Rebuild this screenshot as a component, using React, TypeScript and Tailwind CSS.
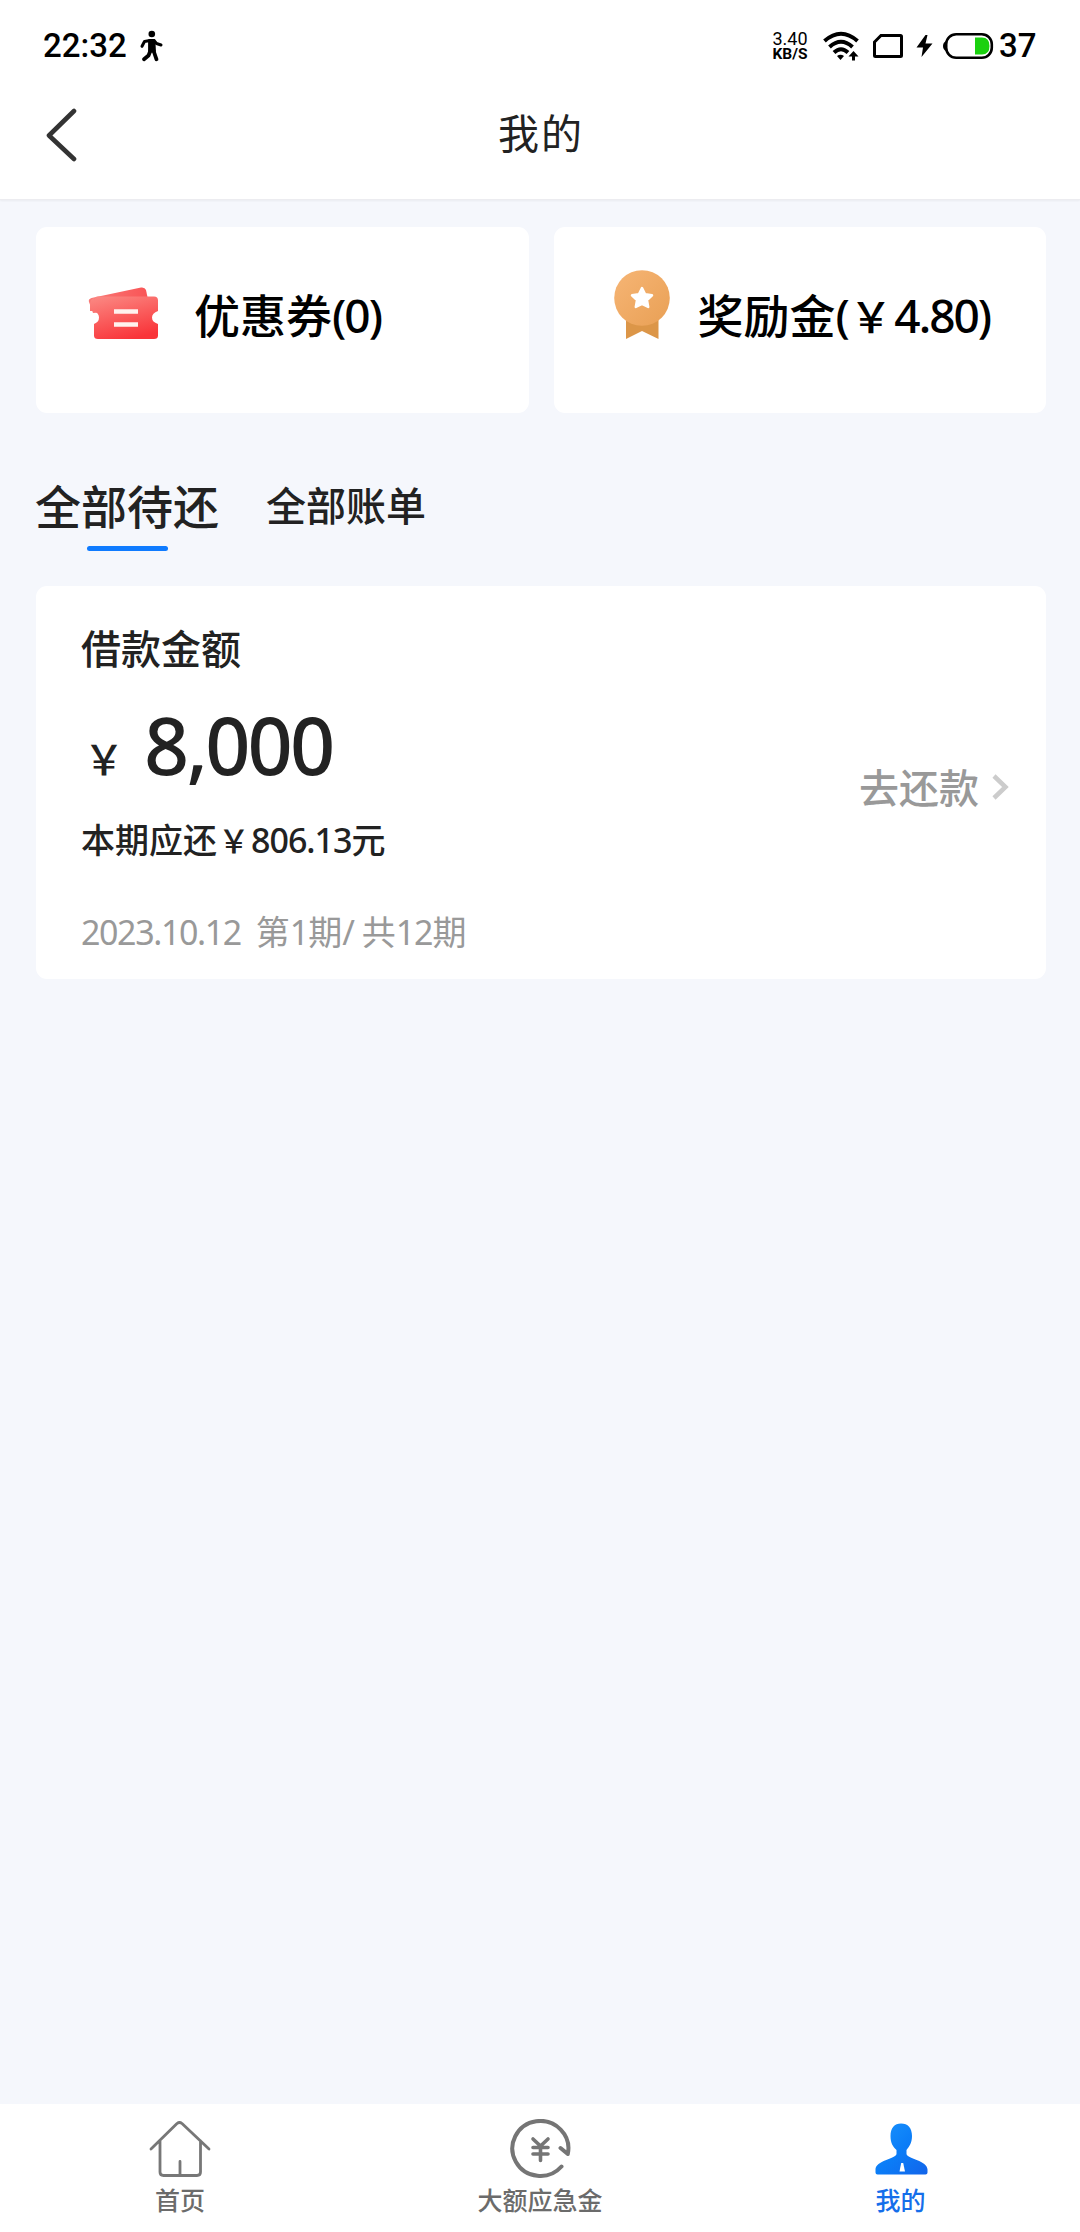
import React from "react";

function StatusBar() {
  return (
    <div className="flex h-[92px] items-center pl-[43px] pr-[44px] font-['Roboto',sans-serif] text-black">
      <span className="text-[33px] font-medium leading-[40px]">22:32</span>
      <svg className="ml-[12px] h-[32px] w-[24px]" viewBox="0 0 24 32" fill="none" stroke="#000" strokeLinecap="round" strokeLinejoin="round">
        <circle cx="12.800" cy="4" r="3.300" fill="#000" stroke="none" />
        <path d="M10.500 10.500H15L15.500 21H10.500z" fill="#000" strokeWidth="2.800" />
        <path d="M11 10.500L5.500 11.500L3 16.300M15 10.500L17.500 13.500L22 15" strokeWidth="3" />
        <path d="M11.500 20.500L9.500 25.500L5 29.300M14.500 20.500L16 25L17.500 29.300" strokeWidth="3.800" />
      </svg>
      <div className="ml-auto flex w-[38px] flex-col items-center pt-[1px]">
        <span className="text-[18px] leading-[16px]">3.40</span>
        <span className="text-[15.500px] font-bold leading-[15px]">KB/S</span>
      </div>
      <svg className="ml-[14px] h-[30px] w-[36px]" viewBox="0 0 36 30" fill="none" stroke="#000">
        <path d="M1.500 10Q18 -4.500 34.500 10" strokeWidth="4" />
        <path d="M6.500 16Q18 5.500 29.500 16" strokeWidth="4" />
        <path d="M11 21.500Q18 15 25 21.500" strokeWidth="4" />
        <path d="M14 25Q17.500 22.500 21 25L17.500 29z" fill="#000" stroke="none" />
        <path d="M30.500 20L35.500 25.500H32V29.500H29V25.500H25.500z" fill="#000" stroke="none" />
      </svg>
      <svg className="ml-[13px] h-[26px] w-[32px]" viewBox="0 0 32 26" fill="none" stroke="#000" strokeWidth="3">
        <path d="M9 2.500H28.500Q29.500 2.500 29.500 3.500V22.500Q29.500 23.500 28.500 23.500H3.500Q2.500 23.500 2.500 22.500V9z" />
      </svg>
      <svg className="ml-[12px] h-[22px] w-[17px]" viewBox="0 0 17 22">
        <path d="M9.500 0L.5 12.500H7L5.500 22L16.500 8.500H9.500L11.500 0z" fill="#000" />
      </svg>
      <svg className="ml-[9px] h-[28px] w-[52px]" viewBox="0 0 52 28">
        <path d="M4 9Q1 10.500 1 14T4 19z" fill="#000" />
        <rect x="4.200" y="2.200" width="45.600" height="23.600" rx="10" fill="#fff" stroke="#000" strokeWidth="2.600" />
        <path d="M33 5.500H40Q47.500 5.500 47.500 14T40 22.500H33z" fill="#1ad10f" />
      </svg>
      <span className="ml-[5px] w-[37px] text-[33px] font-medium leading-[40px]">37</span>
    </div>
  );
}

function Header() {
  return (
    <div className="grid h-[106px] grid-cols-[1fr_auto_1fr] items-center pb-[20px]">
      <svg className="ml-[45px] h-[54px] w-[34px]" viewBox="0 0 34 54" fill="none" stroke="#333" strokeWidth="4.600" strokeLinecap="round" strokeLinejoin="round">
        <path d="M29 3L4 27.500L29 51" />
      </svg>
      <h1 className="-mt-[8px] pl-[2px] text-[41px] leading-[60px] tracking-[2px] text-[#222]">我的</h1>
    </div>
  );
}

function CouponIcon() {
  return (
    <svg className="h-[54px] w-[72px] shrink-0" viewBox="0 0 72 54">
      <defs>
        <linearGradient id="coupon-front" x1="0.200" y1="0" x2="0.600" y2="1">
          <stop offset="0" stopColor="#fb8580" />
          <stop offset="1" stopColor="#f93439" />
        </linearGradient>
        <linearGradient id="coupon-back" x1="0" y1="0" x2="1" y2="0">
          <stop offset="0" stopColor="#f97a77" />
          <stop offset="1" stopColor="#f95355" />
        </linearGradient>
      </defs>
      <path d="M1 15Q0 12 3.500 11L53 .5Q57 0 58 3L62 22L5 26z" fill="url(#coupon-back)" />
      <path d="M6 14Q6 9.500 10 9.500H66Q70 9.500 70 13.500V24Q64 26 64 30.500T70 37V48.500Q70 52 66 52H10Q6 52 6 48.500V37Q11 35 11 30.500T6 24H2V18Q2 12 6 11z" fill="url(#coupon-front)" />
      <path d="M26 24.500H50M26 37.500H50" stroke="#fff2ee" strokeWidth="4.500" />
    </svg>
  );
}

function MedalIcon() {
  return (
    <svg className="h-[70px] w-[56px] shrink-0" viewBox="0 0 56 70">
      <defs>
        <linearGradient id="medal" x1="0" y1="0" x2="1" y2="1">
          <stop offset="0" stopColor="#f6b575" />
          <stop offset="1" stopColor="#e9a055" />
        </linearGradient>
      </defs>
      <path d="M12 45H44.500V69L28 61L12 69z" fill="#dc9648" />
      <circle cx="28" cy="28" r="27.800" fill="url(#medal)" />
      <path d="M28 18L31.100 24.300L38 25.300L33 30.200L34.200 37L28 33.800L21.800 37L23 30.200L18 25.300L24.900 24.300z" fill="#fff" stroke="#fff" strokeWidth="2.500" strokeLinejoin="round" />
    </svg>
  );
}

/* Latin digits inside a Chinese line. */
function Num({ children, className }: { children: React.ReactNode; className: string }) {
  return <span className={`font-['Noto_Sans',sans-serif] leading-none ${className}`}>{children}</span>;
}

/* Full-width yen sign, drawn slightly smaller inside its own cell. */
function Yen() {
  return <span className="inline-block origin-[50%_88%] scale-[0.92] leading-none">￥</span>;
}

function SummaryCards() {
  return (
    <div className="grid grid-cols-2 gap-[25px]">
      <div className="flex h-[186px] items-center rounded-[11px] bg-white pb-[14px] pl-[52px]">
        <div className="mt-[1px]"><CouponIcon /></div>
        <span className="ml-[34px] text-[46px] font-medium leading-[60px] text-black">优惠券<Num className="tracking-[-2px]">(0)</Num></span>
      </div>
      <div className="flex h-[186px] items-center rounded-[11px] bg-white pb-[14px] pl-[60px]">
        <div className="-mt-[16px]"><MedalIcon /></div>
        <span className="ml-[28px] whitespace-nowrap text-[46px] font-medium leading-[60px] text-black">奖励金<Num className="tracking-[-1.500px]">(</Num><Yen /><Num className="tracking-[-2px]">4.80)</Num></span>
      </div>
    </div>
  );
}

function Tabs() {
  return (
    <div className="-ml-px mt-[61px] flex h-[112px] items-start text-[#222]">
      <div className="flex flex-col items-center">
        <span className="text-[46px] font-medium leading-[60px]">全部待还</span>
        <span className="mt-[12px] h-[5px] w-[81px] rounded-full bg-[#0f7bff]" />
      </div>
      <span className="ml-[47px] text-[40px] font-medium leading-[60px]">全部账单</span>
    </div>
  );
}

function LoanCard() {
  return (
    <div className="flex h-[393px] items-center justify-between rounded-[11px] bg-white pl-[45px] pr-[36px] text-[#222]">
      <div className="flex h-full flex-col">
        <div className="mt-[31px] text-[40px] font-medium leading-[60px]">借款金额</div>
        <div className="mt-[23px] flex h-[90px] items-baseline font-medium leading-[90px]">
          <span className="text-[46px]"><span className="inline-block origin-[50%_94%] scale-[0.88] leading-none">￥</span></span>
          <span className="ml-[17px] font-['Noto_Sans',sans-serif] text-[79px] tracking-[-2.800px]">8,000</span>
        </div>
        <div className="mt-[24px] text-[34px] font-medium leading-[50px]">本期应还<Yen /><Num className="tracking-[-1px]">806.13</Num>元</div>
        <div className="mt-[42px] whitespace-pre text-[34px] leading-[50px] text-[#999]"><Num className="tracking-[-1.400px]">2023.10.12  </Num>第<Num className="tracking-[-1px]">1</Num>期<Num className="tracking-[-1px]">/ </Num>共<Num className="tracking-[-1px]">12</Num>期</div>
      </div>
      <div className="flex items-center pt-[6px] text-[#999]">
        <span className="text-[40px] font-medium leading-[60px]">去还款</span>
        <svg className="ml-[13px] mt-[2px] h-[26px] w-[18px]" viewBox="0 0 18 26" fill="none" stroke="#ccc" strokeWidth="4.500">
          <path d="M2 2L13.500 13L2 24" />
        </svg>
      </div>
    </div>
  );
}

function HomeIcon() {
  return (
    <svg className="h-[60px] w-[62px]" viewBox="0 0 62 60" fill="none" stroke="#777" strokeWidth="2.800" strokeLinecap="round" strokeLinejoin="round">
      <path d="M2 30L28 4.500Q30.500 2.500 33 4.500L60 30M11 22V53Q11 56.500 14.500 56.500H48Q51.500 56.500 51.500 53V22M31 42.500V56" />
    </svg>
  );
}

function CashIcon() {
  return (
    <svg className="h-[60px] w-[62px]" viewBox="0 0 62 60" fill="none" stroke="#757575" strokeWidth="4" strokeLinecap="round">
      <path d="M52.500 47.500A28 27.500 0 1 1 58.800 35L51.500 29" strokeLinejoin="round" />
      <path d="M24 20L31.500 27L39 20M31.500 27V41.500M24 28.500H39M24 35H39" strokeWidth="3.600" />
    </svg>
  );
}

function UserIcon() {
  return (
    <svg className="h-[60px] w-[62px]" viewBox="0 0 62 60">
      <defs>
        <linearGradient id="user" x1="0" y1="0" x2="1" y2="1">
          <stop offset="0" stopColor="#1a94fd" />
          <stop offset="0.500" stopColor="#0b7df7" />
          <stop offset="1" stopColor="#1264ea" />
        </linearGradient>
      </defs>
      <path d="M32 4.500C39 4.500 43 9 43 17C43 24 40 28 37.500 31V35C38.500 40 58.500 41.500 58.500 50.500V53.500Q58.500 55.500 56.500 55.500H8.500Q6.500 55.500 6.500 53.500V50.500C6.500 41.500 26.500 40 27.500 35V31C24 28 21.500 24 21.500 17C21.500 9 25.500 4.500 32 4.500z" fill="url(#user)" />
      <path d="M32.200 44H34.200L36 52.500H30.500z" fill="#fff" />
    </svg>
  );
}

function NavItem({ icon, label, active = false }: { icon: React.ReactNode; label: string; active?: boolean }) {
  return (
    <div className="flex flex-1 flex-col items-center pt-[15px]">
      {icon}
      <span className={active ? "mt-[2px] pl-px text-[25px] font-medium leading-[36px] text-[#156eea]" : "mt-[2px] text-[25px] font-medium leading-[36px] text-[#6b6b6b]"}>{label}</span>
    </div>
  );
}

export default function App() {
  return (
    <div className="flex h-[2232px] w-[1080px] flex-col bg-[#f5f7fc] font-['Noto_Sans_CJK_SC',sans-serif]">
      <header className="h-[200px] border-b border-[#ececf0] bg-white shadow-[0_1px_2px_rgba(0,0,0,0.05)]">
        <StatusBar />
        <Header />
      </header>
      <main className="flex-1 pl-[36px] pr-[34px] pt-[27px]">
        <SummaryCards />
        <Tabs />
        <LoanCard />
      </main>
      <nav className="flex h-[128px] bg-white">
        <NavItem icon={<HomeIcon />} label="首页" />
        <NavItem icon={<CashIcon />} label="大额应急金" />
        <NavItem icon={<UserIcon />} label="我的" active />
      </nav>
    </div>
  );
}
